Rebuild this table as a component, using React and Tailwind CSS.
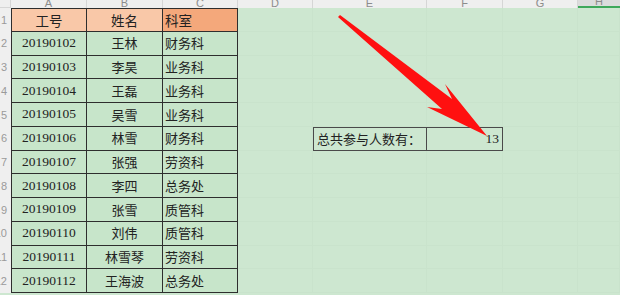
import React from 'react';

const rows = [
  ['工号', '姓名', '科室'],
  ['20190102', '王林', '财务科'],
  ['20190103', '李昊', '业务科'],
  ['20190104', '王磊', '业务科'],
  ['20190105', '吴雪', '业务科'],
  ['20190106', '林雪', '财务科'],
  ['20190107', '张强', '劳资科'],
  ['20190108', '李四', '总务处'],
  ['20190109', '张雪', '质管科'],
  ['20190110', '刘伟', '质管科'],
  ['20190111', '林雪琴', '劳资科'],
  ['20190112', '王海波', '总务处'],
];

const letters = ['A', 'B', 'C', 'D', 'E', 'F', 'G', 'H'];

const ColHead = ({ label, active }) => (
  <div
    className={
      active
        ? 'h-[8px] overflow-hidden flex items-end justify-center bg-[#dcdcdc] border-b-2 border-[#3fa85b]'
        : 'h-[8px] overflow-hidden flex items-end justify-center bg-[#efefef] border-r border-[#d6d6d6]'
    }
  >
    <span className="leading-[12px] text-[11px] text-[#8c8c8c] font-['Liberation_Sans',sans-serif] translate-y-[1px]">
      {label}
    </span>
  </div>
);

const Blank = () => <div className="border-r border-b border-[#c9e3cc]" />;

const App = () => {
  return (
    <div className="relative w-[620px] h-[295px] overflow-hidden bg-[#cde7d0] font-['Liberation_Serif','Noto_Sans_CJK_SC',serif] text-[#222]">
      <div className="grid grid-cols-[11px_76px_76px_75px_75px_114px_76px_75px_1fr] grid-rows-[8px_repeat(12,23.75px)_1fr] h-full">
        <div className="bg-[#efefef] border-r border-b border-[#d6d6d6]" />
        {letters.map((l) => (
          <ColHead key={l} label={l} active={l === 'H'} />
        ))}

        {rows.map((r, i) => {
          const head = i === 0;
          return (
            <React.Fragment key={i}>
              <div className="bg-[#efefef] overflow-hidden flex items-center justify-end pr-[4px] text-[11px] text-[#9a9a9a] font-['Liberation_Sans',sans-serif]">
                {i + 1}
              </div>
              <div
                className={
                  head
                    ? 'flex items-center justify-center border border-[#2e2e2e] bg-[#f9c8a8] text-[13.5px] font-["Noto_Sans_CJK_SC",sans-serif]'
                    : 'flex items-center justify-center border-l border-r border-b border-[#2e2e2e] bg-[#c7e5ca] text-[13.5px]'
                }
              >
                {r[0]}
              </div>
              <div
                className={
                  head
                    ? 'flex items-center justify-center border-t border-r border-b border-[#2e2e2e] bg-[#f9c8a8] text-[13.5px] font-["Noto_Sans_CJK_SC",sans-serif]'
                    : 'flex items-center justify-center border-r border-b border-[#2e2e2e] bg-[#c7e5ca] text-[13px] font-["Noto_Sans_CJK_SC",sans-serif]'
                }
              >
                {r[1]}
              </div>
              <div
                className={
                  head
                    ? 'flex items-center pl-[2px] border-t border-r border-b border-[#2e2e2e] bg-[#f4a87b] text-[13.5px] font-["Noto_Sans_CJK_SC",sans-serif]'
                    : 'flex items-center pl-[2px] border-r border-b border-[#2e2e2e] bg-[#c7e5ca] text-[13px] font-["Noto_Sans_CJK_SC",sans-serif]'
                }
              >
                {r[2]}
              </div>
              <Blank />
              {i === 5 ? (
                <>
                  <div className="flex items-center pl-[3px] border border-[#4a4a4a] text-[13px] font-['Noto_Sans_CJK_SC',sans-serif]">
                    总共参与人数有：
                  </div>
                  <div className="flex items-center justify-end pr-[3px] border-t border-r border-b border-[#4a4a4a] text-[13.5px]">
                    13
                  </div>
                </>
              ) : (
                <>
                  <Blank />
                  <Blank />
                </>
              )}
              <Blank />
              <Blank />
            </React.Fragment>
          );
        })}
      </div>

      {/* red pointer arrow */}
      <svg className="absolute inset-0 pointer-events-none" width="620" height="295" viewBox="0 0 620 295">
        <polygon
          points="340,15 452,99 445,84 487,136 427,107 442,109 338,17"
          fill="#ff1010"
        />
      </svg>
    </div>
  );
};

export default App;
